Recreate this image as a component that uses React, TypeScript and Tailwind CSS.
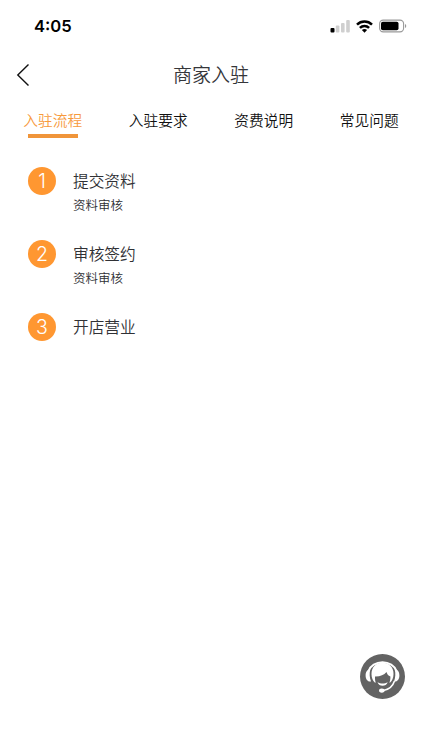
const tabs = ['入驻流程', '入驻要求', '资费说明', '常见问题'];

const steps = [
  { title: '提交资料', note: '资料审核' },
  { title: '审核签约', note: '资料审核' },
  { title: '开店营业', note: '' },
];

function StatusBar() {
  return (
    <div className="flex h-[52px] items-center justify-between pl-[34px] pr-[15px] text-black">
      <span className="font-['Inter',sans-serif] text-[16.6px] leading-5 font-semibold">4:05</span>
      <div className="flex items-center gap-[6px]">
        <svg width="20" height="14" viewBox="0 0 20 14">
          <rect x="0.5" y="9" width="4" height="4.5" rx="1" fill="#000" />
          <rect x="5.8" y="6.5" width="3.6" height="7" rx="1" fill="#cfcfcf" />
          <rect x="11" y="4" width="3.6" height="9.5" rx="1" fill="#cfcfcf" />
          <rect x="16.2" y="1" width="3.6" height="12.5" rx="1" fill="#cfcfcf" />
        </svg>
        <svg width="17" height="13" viewBox="0 0 17 13">
          <g fill="none" stroke="#000" strokeWidth="2.5">
            <path d="M1 4.6C5.2.5 11.8.5 16 4.6" />
            <path d="M3.9 7.9c2.6-2.5 6.6-2.5 9.2 0" />
          </g>
          <path d="M5.9 10c1.5-1.3 3.7-1.3 5.2 0L8.5 12.7z" fill="#000" />
        </svg>
        <svg width="28" height="14" viewBox="0 0 28 14">
          <rect x="0.6" y="1.1" width="24" height="11.8" rx="3.6" fill="none" stroke="#999" strokeWidth="1.1" />
          <rect x="2" y="2.8" width="17.5" height="8.4" rx="1.8" fill="#000" />
          <path d="M26 5c1.7.6 1.7 3.4 0 4z" fill="#999" />
        </svg>
      </div>
    </div>
  );
}

export default function App() {
  return (
    <main className="relative flex h-[750px] w-[422px] flex-col overflow-hidden bg-white font-['Noto_Sans_CJK_SC',sans-serif] font-[350]">
      <StatusBar />
      <header className="grid h-[46px] grid-cols-[46px_1fr_46px] items-center">
        <button aria-label="返回" className="pl-[16px]">
          <svg width="14" height="24" viewBox="0 0 14 24" fill="none" stroke="#111" strokeWidth="1.4">
            <path d="M12.5 1.5 1.8 12l10.7 10.5" />
          </svg>
        </button>
        <h1 className="pb-[2px] text-center text-[19px] leading-7 font-[350] text-[#35363a]">商家入驻</h1>
      </header>
      <nav className="grid h-[40px] grid-cols-4">
        {tabs.map((tab, i) => (
          <button key={tab} className="flex flex-col items-center pt-[11px]">
            <span className={i === 0 ? 'text-[14.7px] leading-[22px] text-[#f79a3c]' : 'text-[14.7px] leading-[22px] text-[#111]'}>
              {tab}
            </span>
            {i === 0 && <span className="mt-[3px] h-[3.5px] w-[50px] bg-[#f0953a]" />}
          </button>
        ))}
      </nav>
      <ol className="flex flex-col pt-[28.8px] pl-[28px]">
        {steps.map((step, i) => (
          <li key={step.title} className="flex h-[73.3px] gap-[17px]">
            <span className="flex size-[28px] items-center justify-center rounded-full bg-[#ff9731] pt-px font-['Inter',sans-serif] text-[19.5px] leading-[27px] font-light text-white">
              {i + 1}
            </span>
            <div className="flex flex-col pt-px">
              <span className="text-[15.7px] leading-[26px] text-[#303135]">{step.title}</span>
              {step.note && <span className="mt-px text-[12.5px] leading-[20px] text-[#303135]">{step.note}</span>}
            </div>
          </li>
        ))}
      </ol>
      <button aria-label="客服" className="absolute top-[654px] left-[360px]">
        <svg width="45" height="45" viewBox="0 0 45 45">
          <circle cx="22.5" cy="22.5" r="22.5" fill="#636363" />
          <path d="M8.5 17a14.600 12.300 0 0 1 28 0" fill="none" stroke="#fff" strokeWidth="1.9" />
          <path d="M10.3 15.5C7.500 15 5.600 17.500 5.600 21.500s2.400 6.500 5.400 6c-1.400-4-1.800-8-.7-12zM34.700 15.500c2.800-.5 4.700 2 4.700 6s-2.400 6.500-5.400 6c1.400-4 1.800-8 .7-12z" fill="#fff" />
          <path d="M22.500 8.800c-7 0-11 4.600-11 11.200 0 4 1.300 6.500 3.300 8.500h15.400c2-2 3.300-4.500 3.300-8.500 0-6.600-4-11.200-11-11.200z" fill="#fff" />
          <path d="M15 22.500c5 .2 9-1.500 11.500-4.500.7 2.300 1.900 3.900 3.900 4.500.3 6.500-3 11-7.900 11s-8-4.500-7.500-11z" fill="#636363" />
          <path d="M17.500 28.200c3 1.800 7.200 1.800 10.200 0-1.400 4.800-8.800 4.800-10.200 0z" fill="#fff" />
          <path d="M34.500 27c-1.800 5.500-5.500 8.500-11 9.500" fill="none" stroke="#fff" strokeWidth="1.6" />
          <ellipse cx="21.8" cy="36.6" rx="2.8" ry="2.1" fill="#fff" />
        </svg>
      </button>
    </main>
  );
}
